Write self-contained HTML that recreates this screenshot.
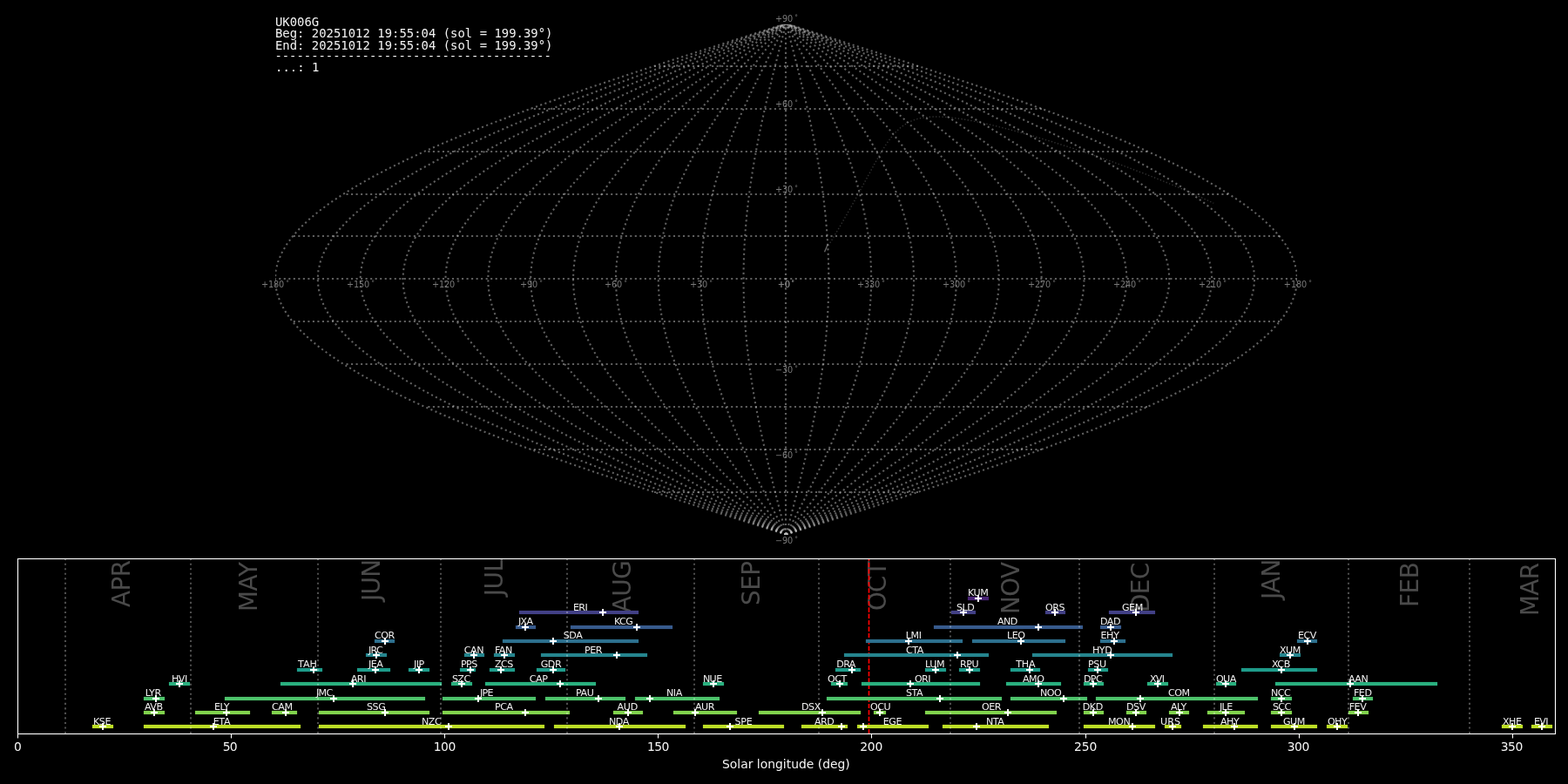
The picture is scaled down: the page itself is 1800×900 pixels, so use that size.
<!DOCTYPE html>
<html lang="en"><head><meta charset="utf-8"><title>UK006G shower association</title>
<style>html,body{margin:0;padding:0;background:#000;width:1800px;height:900px;overflow:hidden}svg{display:block;position:absolute;left:0;top:0;will-change:transform}text{font-family:"DejaVu Sans","Liberation Sans",sans-serif;white-space:pre}.mono{font-family:"DejaVu Sans Mono","Liberation Mono",monospace;font-size:13.889px;fill:#fff;fill-opacity:.95}.g{fill:none;stroke:#c0c0c0;stroke-opacity:.5;stroke-width:2.08;stroke-dasharray:2.0833 3.4375}.tl{font-size:9.722px;fill:#808080;fill-opacity:.94}.dg{font-size:7.4px}.bl{font-size:11.111px;fill:#fff;fill-opacity:.94}.xt{font-size:13.889px;fill:#fff;fill-opacity:.96}.mo{font-size:27.778px;fill:#fff;fill-opacity:.29}.ml{stroke:#fff;stroke-opacity:.3;stroke-width:2.08;stroke-dasharray:2.0833 3.4375;fill:none}</style></head><body>
<svg width="1800" height="900" viewBox="0 0 1800 900">
<rect width="1800" height="900" fill="#000"/>
<defs><clipPath id="c1"><rect x="316" y="28" width="1173" height="586"/></clipPath>
<clipPath id="c2"><rect x="20" y="641" width="1765" height="202"/></clipPath></defs>
<g clip-path="url(#c1)">
<g class="g">
<path d="M902 614 V27"/>
<path d="M902.42 613.61 899.86 603.84 897.31 594.06 894.77 584.28 892.26 574.51 889.77 564.73 887.31 554.95 884.9 545.18 882.54 535.4 880.23 525.62 877.98 515.85 875.8 506.07 873.69 496.3 871.66 486.52 869.71 476.74 867.86 466.97 866.09 457.19 864.43 447.41 862.87 437.64 861.42 427.86 860.09 418.08 858.87 408.31 857.76 398.53 856.78 388.75 855.93 378.98 855.2 369.2 854.61 359.43 854.14 349.65 853.81 339.87 853.6 330.1 853.54 320.32 853.6 310.54 853.81 300.77 854.14 290.99 854.61 281.21 855.2 271.44 855.93 261.66 856.78 251.89 857.76 242.11 858.87 232.33 860.09 222.56 861.42 212.78 862.87 203 864.43 193.23 866.09 183.45 867.86 173.67 869.71 163.9 871.66 154.12 873.69 144.34 875.8 134.57 877.98 124.79 880.23 115.02 882.54 105.24 884.9 95.46 887.31 85.69 889.77 75.91 892.26 66.13 894.77 56.36 897.31 46.58 899.86 36.8 902.42 27.03"/>
<path d="M902.42 613.61 897.3 603.84 892.2 594.06 887.13 584.28 882.09 574.51 877.12 564.73 872.21 554.95 867.38 545.18 862.66 535.4 858.04 525.62 853.54 515.85 849.17 506.07 844.96 496.3 840.9 486.52 837 476.74 833.29 466.97 829.77 457.19 826.44 447.41 823.33 437.64 820.43 427.86 817.75 418.08 815.31 408.31 813.11 398.53 811.15 388.75 809.44 378.98 807.99 369.2 806.79 359.43 805.86 349.65 805.19 339.87 804.79 330.1 804.66 320.32 804.79 310.54 805.19 300.77 805.86 290.99 806.79 281.21 807.99 271.44 809.44 261.66 811.15 251.89 813.11 242.11 815.31 232.33 817.75 222.56 820.43 212.78 823.33 203 826.44 193.23 829.77 183.45 833.29 173.67 837 163.9 840.9 154.12 844.96 144.34 849.17 134.57 853.54 124.79 858.04 115.02 862.66 105.24 867.38 95.46 872.21 85.69 877.12 75.91 882.09 66.13 887.13 56.36 892.2 46.58 897.3 36.8 902.42 27.03"/>
<path d="M902.42 613.61 894.75 603.84 887.09 594.06 879.48 584.28 871.93 574.51 864.47 564.73 857.1 554.95 849.87 545.18 842.77 535.4 835.84 525.62 829.1 515.85 822.55 506.07 816.22 496.3 810.13 486.52 804.29 476.74 798.73 466.97 793.44 457.19 788.45 447.41 783.78 437.64 779.43 427.86 775.42 418.08 771.76 408.31 768.45 398.53 765.51 388.75 762.95 378.98 760.77 369.2 758.98 359.43 757.58 349.65 756.58 339.87 755.97 330.1 755.77 320.32 755.97 310.54 756.58 300.77 757.58 290.99 758.98 281.21 760.77 271.44 762.95 261.66 765.51 251.89 768.45 242.11 771.76 232.33 775.42 222.56 779.43 212.78 783.78 203 788.45 193.23 793.44 183.45 798.73 173.67 804.29 163.9 810.13 154.12 816.22 144.34 822.55 134.57 829.1 124.79 835.84 115.02 842.77 105.24 849.87 95.46 857.1 85.69 864.47 75.91 871.93 66.13 879.48 56.36 887.09 46.58 894.75 36.8 902.42 27.03"/>
<path d="M902.42 613.61 892.19 603.84 881.98 594.06 871.83 584.28 861.77 574.51 851.81 564.73 842 554.95 832.35 545.18 822.89 535.4 813.65 525.62 804.66 515.85 795.93 506.07 787.49 496.3 779.37 486.52 771.59 476.74 764.16 466.97 757.11 457.19 750.47 447.41 744.23 437.64 738.44 427.86 733.09 418.08 728.2 408.31 723.8 398.53 719.88 388.75 716.46 378.98 713.55 369.2 711.16 359.43 709.3 349.65 707.96 339.87 707.16 330.1 706.89 320.32 707.16 310.54 707.96 300.77 709.3 290.99 711.16 281.21 713.55 271.44 716.46 261.66 719.88 251.89 723.8 242.11 728.2 232.33 733.09 222.56 738.44 212.78 744.23 203 750.47 193.23 757.11 183.45 764.16 173.67 771.59 163.9 779.37 154.12 787.49 144.34 795.93 134.57 804.66 124.79 813.65 115.02 822.89 105.24 832.35 95.46 842 85.69 851.81 75.91 861.77 66.13 871.83 56.36 881.98 46.58 892.19 36.8 902.42 27.03"/>
<path d="M902.42 613.61 889.63 603.84 876.87 594.06 864.19 584.28 851.6 574.51 839.16 564.73 826.89 554.95 814.83 545.18 803.01 535.4 791.46 525.62 780.21 515.85 769.3 506.07 758.76 496.3 748.61 486.52 738.88 476.74 729.6 466.97 720.79 457.19 712.48 447.41 704.69 437.64 697.44 427.86 690.75 418.08 684.65 408.31 679.14 398.53 674.24 388.75 669.97 378.98 666.34 369.2 663.35 359.43 661.02 349.65 659.35 339.87 658.34 330.1 658.01 320.32 658.34 310.54 659.35 300.77 661.02 290.99 663.35 281.21 666.34 271.44 669.97 261.66 674.24 251.89 679.14 242.11 684.65 232.33 690.75 222.56 697.44 212.78 704.69 203 712.48 193.23 720.79 183.45 729.6 173.67 738.88 163.9 748.61 154.12 758.76 144.34 769.3 134.57 780.21 124.79 791.46 115.02 803.01 105.24 814.83 95.46 826.89 85.69 839.16 75.91 851.6 66.13 864.19 56.36 876.87 46.58 889.63 36.8 902.42 27.03"/>
<path d="M902.42 613.61 887.07 603.84 871.76 594.06 856.54 584.28 841.44 574.51 826.51 564.73 811.79 554.95 797.31 545.18 783.13 535.4 769.27 525.62 755.77 515.85 742.68 506.07 730.03 496.3 717.85 486.52 706.17 476.74 695.03 466.97 684.46 457.19 674.49 447.41 665.14 437.64 656.44 427.86 648.42 418.08 641.09 408.31 634.48 398.53 628.61 388.75 623.48 378.98 619.12 369.2 615.54 359.43 612.74 349.65 610.73 339.87 609.53 330.1 609.13 320.32 609.53 310.54 610.73 300.77 612.74 290.99 615.54 281.21 619.12 271.44 623.48 261.66 628.61 251.89 634.48 242.11 641.09 232.33 648.42 222.56 656.44 212.78 665.14 203 674.49 193.23 684.46 183.45 695.03 173.67 706.17 163.9 717.85 154.12 730.03 144.34 742.68 134.57 755.77 124.79 769.27 115.02 783.13 105.24 797.31 95.46 811.79 85.69 826.51 75.91 841.44 66.13 856.54 56.36 871.76 46.58 887.07 36.8 902.42 27.03"/>
<path d="M902.42 613.61 884.51 603.84 866.65 594.06 848.89 584.28 831.28 574.51 813.86 564.73 796.68 554.95 779.8 545.18 763.25 535.4 747.08 525.62 731.33 515.85 716.06 506.07 701.3 496.3 687.08 486.52 673.46 476.74 660.47 466.97 648.14 457.19 636.5 447.41 625.6 437.64 615.45 427.86 606.09 418.08 597.54 408.31 589.83 398.53 582.97 388.75 576.99 378.98 571.91 369.2 567.72 359.43 564.46 349.65 562.12 339.87 560.71 330.1 560.25 320.32 560.71 310.54 562.12 300.77 564.46 290.99 567.72 281.21 571.91 271.44 576.99 261.66 582.97 251.89 589.83 242.11 597.54 232.33 606.09 222.56 615.45 212.78 625.6 203 636.5 193.23 648.14 183.45 660.47 173.67 673.46 163.9 687.08 154.12 701.3 144.34 716.06 134.57 731.33 124.79 747.08 115.02 763.25 105.24 779.8 95.46 796.68 85.69 813.86 75.91 831.28 66.13 848.89 56.36 866.65 46.58 884.51 36.8 902.42 27.03"/>
<path d="M902.42 613.61 881.95 603.84 861.54 594.06 841.25 584.28 821.11 574.51 801.21 564.73 781.58 554.95 762.28 545.18 743.36 535.4 724.88 525.62 706.89 515.85 689.44 506.07 672.56 496.3 656.32 486.52 640.75 476.74 625.9 466.97 611.81 457.19 598.51 447.41 586.05 437.64 574.45 427.86 563.76 418.08 553.99 408.31 545.17 398.53 537.34 388.75 530.5 378.98 524.69 369.2 519.91 359.43 516.18 349.65 513.51 339.87 511.9 330.1 511.36 320.32 511.9 310.54 513.51 300.77 516.18 290.99 519.91 281.21 524.69 271.44 530.5 261.66 537.34 251.89 545.17 242.11 553.99 232.33 563.76 222.56 574.45 212.78 586.05 203 598.51 193.23 611.81 183.45 625.9 173.67 640.75 163.9 656.32 154.12 672.56 144.34 689.44 134.57 706.89 124.79 724.88 115.02 743.36 105.24 762.28 95.46 781.58 85.69 801.21 75.91 821.11 66.13 841.25 56.36 861.54 46.58 881.95 36.8 902.42 27.03"/>
<path d="M902.42 613.61 879.4 603.84 856.43 594.06 833.6 584.28 810.95 574.51 788.56 564.73 766.47 554.95 744.76 545.18 723.48 535.4 702.69 525.62 682.45 515.85 662.81 506.07 643.83 496.3 625.56 486.52 608.04 476.74 591.34 466.97 575.48 457.19 560.52 447.41 546.5 437.64 533.46 427.86 521.42 418.08 510.43 408.31 500.52 398.53 491.7 388.75 484.01 378.98 477.47 369.2 472.1 359.43 467.9 349.65 464.89 339.87 463.08 330.1 462.48 320.32 463.08 310.54 464.89 300.77 467.9 290.99 472.1 281.21 477.47 271.44 484.01 261.66 491.7 251.89 500.52 242.11 510.43 232.33 521.42 222.56 533.46 212.78 546.5 203 560.52 193.23 575.48 183.45 591.34 173.67 608.04 163.9 625.56 154.12 643.83 144.34 662.81 134.57 682.45 124.79 702.69 115.02 723.48 105.24 744.76 95.46 766.47 85.69 788.56 75.91 810.95 66.13 833.6 56.36 856.43 46.58 879.4 36.8 902.42 27.03"/>
<path d="M902.42 613.61 876.84 603.84 851.32 594.06 825.95 584.28 800.79 574.51 775.9 564.73 751.37 554.95 727.24 545.18 703.6 535.4 680.5 525.62 658.01 515.85 636.19 506.07 615.1 496.3 594.8 486.52 575.34 476.74 556.77 466.97 539.16 457.19 522.54 447.41 506.96 437.64 492.46 427.86 479.09 418.08 466.88 408.31 455.86 398.53 446.07 388.75 437.52 378.98 430.26 369.2 424.28 359.43 419.62 349.65 416.28 339.87 414.27 330.1 413.6 320.32 414.27 310.54 416.28 300.77 419.62 290.99 424.28 281.21 430.26 271.44 437.52 261.66 446.07 251.89 455.86 242.11 466.88 232.33 479.09 222.56 492.46 212.78 506.96 203 522.54 193.23 539.16 183.45 556.77 173.67 575.34 163.9 594.8 154.12 615.1 144.34 636.19 134.57 658.01 124.79 680.5 115.02 703.6 105.24 727.24 95.46 751.37 85.69 775.9 75.91 800.79 66.13 825.95 56.36 851.32 46.58 876.84 36.8 902.42 27.03"/>
<path d="M902.42 613.61 874.28 603.84 846.21 594.06 818.3 584.28 790.63 574.51 763.25 564.73 736.26 554.95 709.72 545.18 683.72 535.4 658.31 525.62 633.57 515.85 609.57 506.07 586.37 496.3 564.03 486.52 542.63 476.74 522.21 466.97 502.83 457.19 484.55 447.41 467.41 437.64 451.47 427.86 436.76 418.08 423.32 408.31 411.2 398.53 400.43 388.75 391.04 378.98 383.04 369.2 376.47 359.43 371.34 349.65 367.66 339.87 365.45 330.1 364.72 320.32 365.45 310.54 367.66 300.77 371.34 290.99 376.47 281.21 383.04 271.44 391.04 261.66 400.43 251.89 411.2 242.11 423.32 232.33 436.76 222.56 451.47 212.78 467.41 203 484.55 193.23 502.83 183.45 522.21 173.67 542.63 163.9 564.03 154.12 586.37 144.34 609.57 134.57 633.57 124.79 658.31 115.02 683.72 105.24 709.72 95.46 736.26 85.69 763.25 75.91 790.63 66.13 818.3 56.36 846.21 46.58 874.28 36.8 902.42 27.03"/>
<path d="M902.42 613.61 871.72 603.84 841.11 594.06 810.66 584.28 780.46 574.51 750.6 564.73 721.16 554.95 692.21 545.18 663.83 535.4 636.12 525.62 609.13 515.85 582.94 506.07 557.63 496.3 533.27 486.52 509.92 476.74 487.64 466.97 466.5 457.19 446.56 447.41 427.86 437.64 410.47 427.86 394.42 418.08 379.77 408.31 366.55 398.53 354.8 388.75 344.55 378.98 335.82 369.2 328.65 359.43 323.06 349.65 319.05 339.87 316.64 330.1 315.84 320.32 316.64 310.54 319.05 300.77 323.06 290.99 328.65 281.21 335.82 271.44 344.55 261.66 354.8 251.89 366.55 242.11 379.77 232.33 394.42 222.56 410.47 212.78 427.86 203 446.56 193.23 466.5 183.45 487.64 173.67 509.92 163.9 533.27 154.12 557.63 144.34 582.94 134.57 609.13 124.79 636.12 115.02 663.83 105.24 692.21 95.46 721.16 85.69 750.6 75.91 780.46 66.13 810.66 56.36 841.11 46.58 871.72 36.8 902.42 27.03"/>
<path d="M902.42 613.61 933.12 603.84 963.73 594.06 994.18 584.28 1024.38 574.51 1054.24 564.73 1083.68 554.95 1112.63 545.18 1141.01 535.4 1168.72 525.62 1195.71 515.85 1221.9 506.07 1247.21 496.3 1271.57 486.52 1294.92 476.74 1317.2 466.97 1338.34 457.19 1358.28 447.41 1376.98 437.64 1394.37 427.86 1410.42 418.08 1425.07 408.31 1438.29 398.53 1450.04 388.75 1460.29 378.98 1469.02 369.2 1476.19 359.43 1481.78 349.65 1485.79 339.87 1488.2 330.1 1489 320.32 1488.2 310.54 1485.79 300.77 1481.78 290.99 1476.19 281.21 1469.02 271.44 1460.29 261.66 1450.04 251.89 1438.29 242.11 1425.07 232.33 1410.42 222.56 1394.37 212.78 1376.98 203 1358.28 193.23 1338.34 183.45 1317.2 173.67 1294.92 163.9 1271.57 154.12 1247.21 144.34 1221.9 134.57 1195.71 124.79 1168.72 115.02 1141.01 105.24 1112.63 95.46 1083.68 85.69 1054.24 75.91 1024.38 66.13 994.18 56.36 963.73 46.58 933.12 36.8 902.42 27.03"/>
<path d="M902.42 613.61 930.56 603.84 958.63 594.06 986.54 584.28 1014.21 574.51 1041.59 564.73 1068.58 554.95 1095.12 545.18 1121.12 535.4 1146.53 525.62 1171.27 515.85 1195.27 506.07 1218.47 496.3 1240.81 486.52 1262.21 476.74 1282.63 466.97 1302.01 457.19 1320.29 447.41 1337.43 437.64 1353.37 427.86 1368.08 418.08 1381.52 408.31 1393.64 398.53 1404.41 388.75 1413.8 378.98 1421.8 369.2 1428.37 359.43 1433.5 349.65 1437.18 339.87 1439.39 330.1 1440.12 320.32 1439.39 310.54 1437.18 300.77 1433.5 290.99 1428.37 281.21 1421.8 271.44 1413.8 261.66 1404.41 251.89 1393.64 242.11 1381.52 232.33 1368.08 222.56 1353.37 212.78 1337.43 203 1320.29 193.23 1302.01 183.45 1282.63 173.67 1262.21 163.9 1240.81 154.12 1218.47 144.34 1195.27 134.57 1171.27 124.79 1146.53 115.02 1121.12 105.24 1095.12 95.46 1068.58 85.69 1041.59 75.91 1014.21 66.13 986.54 56.36 958.63 46.58 930.56 36.8 902.42 27.03"/>
<path d="M902.42 613.61 928 603.84 953.52 594.06 978.89 584.28 1004.05 574.51 1028.94 564.73 1053.47 554.95 1077.6 545.18 1101.24 535.4 1124.34 525.62 1146.83 515.85 1168.65 506.07 1189.74 496.3 1210.04 486.52 1229.5 476.74 1248.07 466.97 1265.68 457.19 1282.3 447.41 1297.88 437.64 1312.38 427.86 1325.75 418.08 1337.96 408.31 1348.98 398.53 1358.77 388.75 1367.32 378.98 1374.58 369.2 1380.56 359.43 1385.22 349.65 1388.56 339.87 1390.57 330.1 1391.24 320.32 1390.57 310.54 1388.56 300.77 1385.22 290.99 1380.56 281.21 1374.58 271.44 1367.32 261.66 1358.77 251.89 1348.98 242.11 1337.96 232.33 1325.75 222.56 1312.38 212.78 1297.88 203 1282.3 193.23 1265.68 183.45 1248.07 173.67 1229.5 163.9 1210.04 154.12 1189.74 144.34 1168.65 134.57 1146.83 124.79 1124.34 115.02 1101.24 105.24 1077.6 95.46 1053.47 85.69 1028.94 75.91 1004.05 66.13 978.89 56.36 953.52 46.58 928 36.8 902.42 27.03"/>
<path d="M902.42 613.61 925.44 603.84 948.41 594.06 971.24 584.28 993.89 574.51 1016.28 564.73 1038.37 554.95 1060.08 545.18 1081.36 535.4 1102.15 525.62 1122.39 515.85 1142.03 506.07 1161.01 496.3 1179.28 486.52 1196.8 476.74 1213.5 466.97 1229.36 457.19 1244.32 447.41 1258.34 437.64 1271.38 427.86 1283.42 418.08 1294.41 408.31 1304.32 398.53 1313.14 388.75 1320.83 378.98 1327.37 369.2 1332.74 359.43 1336.94 349.65 1339.95 339.87 1341.76 330.1 1342.36 320.32 1341.76 310.54 1339.95 300.77 1336.94 290.99 1332.74 281.21 1327.37 271.44 1320.83 261.66 1313.14 251.89 1304.32 242.11 1294.41 232.33 1283.42 222.56 1271.38 212.78 1258.34 203 1244.32 193.23 1229.36 183.45 1213.5 173.67 1196.8 163.9 1179.28 154.12 1161.01 144.34 1142.03 134.57 1122.39 124.79 1102.15 115.02 1081.36 105.24 1060.08 95.46 1038.37 85.69 1016.28 75.91 993.89 66.13 971.24 56.36 948.41 46.58 925.44 36.8 902.42 27.03"/>
<path d="M902.42 613.61 922.89 603.84 943.3 594.06 963.59 584.28 983.73 574.51 1003.63 564.73 1023.26 554.95 1042.56 545.18 1061.48 535.4 1079.96 525.62 1097.95 515.85 1115.4 506.07 1132.28 496.3 1148.52 486.52 1164.09 476.74 1178.94 466.97 1193.03 457.19 1206.33 447.41 1218.79 437.64 1230.39 427.86 1241.08 418.08 1250.85 408.31 1259.67 398.53 1267.5 388.75 1274.34 378.98 1280.15 369.2 1284.93 359.43 1288.66 349.65 1291.33 339.87 1292.94 330.1 1293.48 320.32 1292.94 310.54 1291.33 300.77 1288.66 290.99 1284.93 281.21 1280.15 271.44 1274.34 261.66 1267.5 251.89 1259.67 242.11 1250.85 232.33 1241.08 222.56 1230.39 212.78 1218.79 203 1206.33 193.23 1193.03 183.45 1178.94 173.67 1164.09 163.9 1148.52 154.12 1132.28 144.34 1115.4 134.57 1097.95 124.79 1079.96 115.02 1061.48 105.24 1042.56 95.46 1023.26 85.69 1003.63 75.91 983.73 66.13 963.59 56.36 943.3 46.58 922.89 36.8 902.42 27.03"/>
<path d="M902.42 613.61 920.33 603.84 938.19 594.06 955.95 584.28 973.56 574.51 990.98 564.73 1008.16 554.95 1025.04 545.18 1041.59 535.4 1057.76 525.62 1073.51 515.85 1088.78 506.07 1103.54 496.3 1117.76 486.52 1131.38 476.74 1144.37 466.97 1156.7 457.19 1168.34 447.41 1179.24 437.64 1189.39 427.86 1198.75 418.08 1207.3 408.31 1215.01 398.53 1221.87 388.75 1227.85 378.98 1232.93 369.2 1237.12 359.43 1240.38 349.65 1242.72 339.87 1244.13 330.1 1244.59 320.32 1244.13 310.54 1242.72 300.77 1240.38 290.99 1237.12 281.21 1232.93 271.44 1227.85 261.66 1221.87 251.89 1215.01 242.11 1207.3 232.33 1198.75 222.56 1189.39 212.78 1179.24 203 1168.34 193.23 1156.7 183.45 1144.37 173.67 1131.38 163.9 1117.76 154.12 1103.54 144.34 1088.78 134.57 1073.51 124.79 1057.76 115.02 1041.59 105.24 1025.04 95.46 1008.16 85.69 990.98 75.91 973.56 66.13 955.95 56.36 938.19 46.58 920.33 36.8 902.42 27.03"/>
<path d="M902.42 613.61 917.77 603.84 933.08 594.06 948.3 584.28 963.4 574.51 978.33 564.73 993.05 554.95 1007.53 545.18 1021.71 535.4 1035.57 525.62 1049.07 515.85 1062.16 506.07 1074.81 496.3 1086.99 486.52 1098.67 476.74 1109.81 466.97 1120.38 457.19 1130.35 447.41 1139.7 437.64 1148.4 427.86 1156.42 418.08 1163.75 408.31 1170.36 398.53 1176.23 388.75 1181.36 378.98 1185.72 369.2 1189.3 359.43 1192.1 349.65 1194.11 339.87 1195.31 330.1 1195.71 320.32 1195.31 310.54 1194.11 300.77 1192.1 290.99 1189.3 281.21 1185.72 271.44 1181.36 261.66 1176.23 251.89 1170.36 242.11 1163.75 232.33 1156.42 222.56 1148.4 212.78 1139.7 203 1130.35 193.23 1120.38 183.45 1109.81 173.67 1098.67 163.9 1086.99 154.12 1074.81 144.34 1062.16 134.57 1049.07 124.79 1035.57 115.02 1021.71 105.24 1007.53 95.46 993.05 85.69 978.33 75.91 963.4 66.13 948.3 56.36 933.08 46.58 917.77 36.8 902.42 27.03"/>
<path d="M902.42 613.61 915.21 603.84 927.97 594.06 940.65 584.28 953.24 574.51 965.68 564.73 977.95 554.95 990.01 545.18 1001.83 535.4 1013.38 525.62 1024.62 515.85 1035.54 506.07 1046.08 496.3 1056.23 486.52 1065.96 476.74 1075.24 466.97 1084.05 457.19 1092.36 447.41 1100.15 437.64 1107.4 427.86 1114.09 418.08 1120.19 408.31 1125.7 398.53 1130.6 388.75 1134.87 378.98 1138.5 369.2 1141.49 359.43 1143.82 349.65 1145.49 339.87 1146.5 330.1 1146.83 320.32 1146.5 310.54 1145.49 300.77 1143.82 290.99 1141.49 281.21 1138.5 271.44 1134.87 261.66 1130.6 251.89 1125.7 242.11 1120.19 232.33 1114.09 222.56 1107.4 212.78 1100.15 203 1092.36 193.23 1084.05 183.45 1075.24 173.67 1065.96 163.9 1056.23 154.12 1046.08 144.34 1035.54 134.57 1024.62 124.79 1013.38 115.02 1001.83 105.24 990.01 95.46 977.95 85.69 965.68 75.91 953.24 66.13 940.65 56.36 927.97 46.58 915.21 36.8 902.42 27.03"/>
<path d="M902.42 613.61 912.65 603.84 922.86 594.06 933.01 584.28 943.07 574.51 953.03 564.73 962.84 554.95 972.49 545.18 981.95 535.4 991.19 525.62 1000.18 515.85 1008.91 506.07 1017.35 496.3 1025.47 486.52 1033.25 476.74 1040.68 466.97 1047.73 457.19 1054.37 447.41 1060.61 437.64 1066.4 427.86 1071.75 418.08 1076.64 408.31 1081.04 398.53 1084.96 388.75 1088.38 378.98 1091.29 369.2 1093.68 359.43 1095.54 349.65 1096.88 339.87 1097.68 330.1 1097.95 320.32 1097.68 310.54 1096.88 300.77 1095.54 290.99 1093.68 281.21 1091.29 271.44 1088.38 261.66 1084.96 251.89 1081.04 242.11 1076.64 232.33 1071.75 222.56 1066.4 212.78 1060.61 203 1054.37 193.23 1047.73 183.45 1040.68 173.67 1033.25 163.9 1025.47 154.12 1017.35 144.34 1008.91 134.57 1000.18 124.79 991.19 115.02 981.95 105.24 972.49 95.46 962.84 85.69 953.03 75.91 943.07 66.13 933.01 56.36 922.86 46.58 912.65 36.8 902.42 27.03"/>
<path d="M902.42 613.61 910.09 603.84 917.75 594.06 925.36 584.28 932.91 574.51 940.37 564.73 947.74 554.95 954.97 545.18 962.07 535.4 969 525.62 975.74 515.85 982.29 506.07 988.62 496.3 994.71 486.52 1000.55 476.74 1006.11 466.97 1011.4 457.19 1016.39 447.41 1021.06 437.64 1025.41 427.86 1029.42 418.08 1033.08 408.31 1036.39 398.53 1039.33 388.75 1041.89 378.98 1044.07 369.2 1045.86 359.43 1047.26 349.65 1048.26 339.87 1048.87 330.1 1049.07 320.32 1048.87 310.54 1048.26 300.77 1047.26 290.99 1045.86 281.21 1044.07 271.44 1041.89 261.66 1039.33 251.89 1036.39 242.11 1033.08 232.33 1029.42 222.56 1025.41 212.78 1021.06 203 1016.39 193.23 1011.4 183.45 1006.11 173.67 1000.55 163.9 994.71 154.12 988.62 144.34 982.29 134.57 975.74 124.79 969 115.02 962.07 105.24 954.97 95.46 947.74 85.69 940.37 75.91 932.91 66.13 925.36 56.36 917.75 46.58 910.09 36.8 902.42 27.03"/>
<path d="M902.42 613.61 907.54 603.84 912.64 594.06 917.71 584.28 922.75 574.51 927.72 564.73 932.63 554.95 937.46 545.18 942.18 535.4 946.8 525.62 951.3 515.85 955.67 506.07 959.88 496.3 963.94 486.52 967.84 476.74 971.55 466.97 975.07 457.19 978.4 447.41 981.51 437.64 984.41 427.86 987.09 418.08 989.53 408.31 991.73 398.53 993.69 388.75 995.4 378.98 996.85 369.2 998.05 359.43 998.98 349.65 999.65 339.87 1000.05 330.1 1000.18 320.32 1000.05 310.54 999.65 300.77 998.98 290.99 998.05 281.21 996.85 271.44 995.4 261.66 993.69 251.89 991.73 242.11 989.53 232.33 987.09 222.56 984.41 212.78 981.51 203 978.4 193.23 975.07 183.45 971.55 173.67 967.84 163.9 963.94 154.12 959.88 144.34 955.67 134.57 951.3 124.79 946.8 115.02 942.18 105.24 937.46 95.46 932.63 85.69 927.72 75.91 922.75 66.13 917.71 56.36 912.64 46.58 907.54 36.8 902.42 27.03"/>
<path d="M902.42 613.61 904.98 603.84 907.53 594.06 910.07 584.28 912.58 574.51 915.07 564.73 917.53 554.95 919.94 545.18 922.3 535.4 924.61 525.62 926.86 515.85 929.04 506.07 931.15 496.3 933.18 486.52 935.13 476.74 936.98 466.97 938.75 457.19 940.41 447.41 941.97 437.64 943.42 427.86 944.75 418.08 945.97 408.31 947.08 398.53 948.06 388.75 948.91 378.98 949.64 369.2 950.23 359.43 950.7 349.65 951.03 339.87 951.24 330.1 951.3 320.32 951.24 310.54 951.03 300.77 950.7 290.99 950.23 281.21 949.64 271.44 948.91 261.66 948.06 251.89 947.08 242.11 945.97 232.33 944.75 222.56 943.42 212.78 941.97 203 940.41 193.23 938.75 183.45 936.98 173.67 935.13 163.9 933.18 154.12 931.15 144.34 929.04 134.57 926.86 124.79 924.61 115.02 922.3 105.24 919.94 95.46 917.53 85.69 915.07 75.91 912.58 66.13 910.07 56.36 907.53 46.58 904.98 36.8 902.42 27.03"/>
<path d="M902 565 H751"/>
<path d="M1054 565 H902"/>
<path d="M902 516 H609"/>
<path d="M1196 516 H902"/>
<path d="M902 467 H488"/>
<path d="M1317 467 H902"/>
<path d="M902 418 H394"/>
<path d="M1410 418 H902"/>
<path d="M902 369 H336"/>
<path d="M1469 369 H902"/>
<path d="M902 320 H316"/>
<path d="M1489 320 H902"/>
<path d="M902 271 H336"/>
<path d="M1469 271 H902"/>
<path d="M902 223 H394"/>
<path d="M1410 223 H902"/>
<path d="M902 174 H488"/>
<path d="M1317 174 H902"/>
<path d="M902 125 H609"/>
<path d="M1196 125 H902"/>
<path d="M902 76 H751"/>
<path d="M1054 76 H902"/>
</g>
<path d="M950.91 282.06 951.76 280.66 952.61 279.26 953.46 277.86 954.31 276.47 955.15 275.07 955.99 273.68 956.83 272.28 957.66 270.89 958.49 269.5 959.32 268.11 960.15 266.72 960.97 265.33 961.79 263.95 962.61 262.57 963.42 261.18 964.23 259.8 965.04 258.42 965.84 257.05 966.64 255.67 967.44 254.3 968.23 252.93 969.02 251.56 969.81 250.19 970.59 248.82 971.37 247.46 972.15 246.1 972.92 244.74 973.69 243.38 974.46 242.03 975.22 240.67 975.98 239.32 976.74 237.97 977.49 236.63 978.24 235.29 978.99 233.95 979.74 232.61 980.48 231.28 981.21 229.95 981.95 228.62 982.68 227.29 983.4 225.97 984.13 224.65 984.85 223.34 985.56 222.02 986.28 220.72 986.99 219.41 987.69 218.11 988.4 216.81 989.1 215.52 989.8 214.23 990.49 212.94 991.19 211.66 991.88 210.38 992.56 209.11 993.25 207.84 993.93 206.58 994.61 205.32 995.28 204.06 995.96 202.81 996.63 201.57 997.3 200.33 997.96 199.09 998.63 197.86 999.29 196.64 999.95 195.42 1000.61 194.2 1001.27 193 1001.93 191.8 1002.58 190.6 1003.23 189.41 1003.89 188.23 1004.54 187.06 1005.19 185.89 1005.84 184.72 1006.49 183.57 1007.14 182.42 1007.79 181.28 1008.43 180.15 1009.08 179.02 1009.73 177.91 1010.38 176.8 1011.03 175.7 1011.69 174.61 1012.34 173.52 1012.99 172.45 1013.65 171.38 1014.31 170.33 1014.97 169.28 1015.64 168.25 1016.3 167.22 1016.97 166.2 1017.65 165.2 1018.33 164.2 1019.01 163.22 1019.7 162.25 1020.39 161.28 1021.08 160.33 1021.79 159.4 1022.5 158.47 1023.21 157.56 1023.94 156.66 1024.67 155.77 1025.4 154.9 1026.15 154.04 1026.91 153.19 1027.67 152.36 1028.44 151.54 1029.23 150.74 1030.02 149.95 1030.83 149.18 1031.65 148.42 1032.48 147.68 1033.33 146.96 1034.18 146.25 1035.06 145.56 1035.94 144.89 1036.84 144.23 1037.76 143.59 1038.7 142.97 1039.65 142.37 1040.62 141.79 1041.61 141.22 1042.62 140.68 1043.64 140.15 1044.69 139.65 1045.76 139.16 1046.85 138.7 1047.97 138.25 1049.11 137.83 1050.27 137.43 1051.45 137.04 1052.66 136.68 1053.9 136.35 1055.16 136.03 1056.45 135.74 1057.77 135.47 1059.12 135.22 1060.49 134.99 1061.9 134.79 1063.33 134.61 1064.8 134.45 1066.29 134.32 1067.82 134.2 1069.38 134.12 1070.97 134.05 1072.59 134.01 1074.25 134 1075.94 134 1077.67 134.03 1079.43 134.08 1081.22 134.16 1083.05 134.26 1084.91 134.38 1086.81 134.53 1088.74 134.7 1090.71 134.89 1092.71 135.11 1094.75 135.35 1096.82 135.61 1098.93 135.89 1101.07 136.2 1103.25 136.53 1105.47 136.88 1107.71 137.25 1110 137.64 1112.31 138.05 1114.66 138.49 1117.05 138.94 1119.46 139.42 1121.91 139.92 1124.39 140.43 1126.91 140.97 1129.45 141.53 1132.03 142.1 1134.63 142.69 1137.27 143.3 1139.94 143.93 1142.63 144.58 1145.35 145.25 1148.1 145.93 1150.88 146.63 1153.68 147.35 1156.51 148.08 1159.36 148.83 1162.24 149.6 1165.14 150.38 1168.07 151.17 1171.01 151.98 1173.98 152.81 1176.97 153.65 1179.98 154.5 1183.01 155.37 1186.05 156.25 1189.12 157.14 1192.2 158.05 1195.29 158.97 1198.41 159.9 1201.54 160.85 1204.68 161.8 1207.83 162.77 1211 163.75 1214.18 164.74 1217.37 165.74 1220.57 166.75 1223.78 167.77 1227 168.8 1230.23 169.85 1233.46 170.9 1236.7 171.96 1239.95 173.03 1243.2 174.11 1246.46 175.19 1249.72 176.29 1252.98 177.4 1256.25 178.51 1259.52 179.63 1262.79 180.76 1266.06 181.9 1269.33 183.04 1272.6 184.19 1275.86 185.35 1279.13 186.52 1282.39 187.69 1285.65 188.87 1288.9 190.05 1292.16 191.25 1295.4 192.44 1298.64 193.65 1301.87 194.86 1305.1 196.08 1308.32 197.3 1311.53 198.52 1314.73 199.76 1317.92 200.99 1321.1 202.24 1324.27 203.49 1327.43 204.74 1330.58 206 1333.72 207.26 1336.84 208.53 1339.96 209.8 1343.06 211.07 1346.14 212.35 1349.21 213.64 1352.26 214.92 1355.3 216.22 1358.33 217.51 1361.33 218.81 1364.32 220.12 1367.3 221.42 1370.25 222.73 1373.19 224.05 1376.11 225.36 1379.01 226.68 1381.89 228.01 1384.75 229.33 1387.59 230.66 1390.41 232 1393.2 233.33" fill="none" stroke="#fff" stroke-opacity=".19" stroke-width="1.39" stroke-dasharray="1.3889 2.2917"/>
<path d="M946.5 289.3 L950.2 280.7" fill="none" stroke="#fff" stroke-opacity=".4" stroke-width="1.39"/>
</g>
<text class="tl" x="889.94" y="624" letter-spacing="-0.12">−90<tspan class="dg" x="912.21" y="620.57">°</tspan></text>
<text class="tl" x="889.94" y="526" letter-spacing="-0.12">−60<tspan class="dg" x="912.21" y="522.57">°</tspan></text>
<text class="tl" x="889.94" y="428" letter-spacing="-0.12">−30<tspan class="dg" x="912.21" y="424.57">°</tspan></text>
<text class="tl" x="892.97" y="330" letter-spacing="-0.04">+0<tspan class="dg" x="908.15" y="327">°</tspan></text>
<text class="tl" x="890.02" y="221" letter-spacing="-0.12">+30<tspan class="dg" x="912.21" y="217.57">°</tspan></text>
<text class="tl" x="890.02" y="123" letter-spacing="-0.12">+60<tspan class="dg" x="912.21" y="119.57">°</tspan></text>
<text class="tl" x="890.02" y="25" letter-spacing="-0.12">+90<tspan class="dg" x="912.21" y="21.57">°</tspan></text>
<text class="tl" x="892.67" y="330" letter-spacing="-0.04">+0<tspan class="dg" x="908.35" y="327">°</tspan></text>
<text class="tl" x="792.02" y="330" letter-spacing="-0.12">+30<tspan class="dg" x="814.14" y="326.66">°</tspan></text>
<text class="tl" x="694.04" y="330" letter-spacing="-0.12">+60<tspan class="dg" x="716.16" y="326.69">°</tspan></text>
<text class="tl" x="597.02" y="330" letter-spacing="-0.12">+90<tspan class="dg" x="619.37" y="326.62">°</tspan></text>
<text class="tl" x="496.01" y="330" letter-spacing="-0.19">+120<tspan class="dg" x="524.16" y="326.63">°</tspan></text>
<text class="tl" x="397.96" y="330" letter-spacing="-0.12">+150<tspan class="dg" x="426.18" y="326.66">°</tspan></text>
<text class="tl" x="299.89" y="330" letter-spacing="-0.12">+180<tspan class="dg" x="328.13" y="326.62">°</tspan></text>
<text class="tl" x="1473.82" y="330" letter-spacing="-0.08">+180<tspan class="dg" x="1502.15" y="326.65">°</tspan></text>
<text class="tl" x="1375.88" y="330" letter-spacing="-0.12">+210<tspan class="dg" x="1404.18" y="326.6">°</tspan></text>
<text class="tl" x="1277.93" y="330" letter-spacing="-0.12">+240<tspan class="dg" x="1306.21" y="326.63">°</tspan></text>
<text class="tl" x="1179.98" y="330" letter-spacing="-0.12">+270<tspan class="dg" x="1208.33" y="326.69">°</tspan></text>
<text class="tl" x="1082" y="330" letter-spacing="-0.19">+300<tspan class="dg" x="1110.34" y="326.65">°</tspan></text>
<text class="tl" x="983.93" y="330" letter-spacing="-0.12">+330<tspan class="dg" x="1012.37" y="326.63">°</tspan></text>
<text class="mono" x="316" y="30">UK006G</text>
<text class="mono" x="315.9" y="43" letter-spacing="0.03">Beg: 20251012 19:55:04 (sol = 199.39°)</text>
<text class="mono" x="315.9" y="57" letter-spacing="0.03">End: 20251012 19:55:04 (sol = 199.39°)</text>
<text class="mono" x="315.39" y="69">--------------------------------------</text>
<text class="mono" x="316.05" y="82" letter-spacing="0.03">...: 1</text>
<g clip-path="url(#c2)">
<text class="mo" transform="translate(1469.12 688.09) rotate(-90)" letter-spacing="-0.51">JAN</text>
<text class="mo" transform="translate(1628.22 696.9) rotate(-90)" letter-spacing="-0.47">FEB</text>
<text class="mo" transform="translate(1766.04 707.05) rotate(-90)" letter-spacing="-0.6">MAR</text>
<text class="mo" transform="translate(149.11 696.95) rotate(-90)" letter-spacing="-0.48">APR</text>
<text class="mo" transform="translate(295.22 701.95) rotate(-90)" letter-spacing="-0.43">MAY</text>
<text class="mo" transform="translate(436.22 689.94) rotate(-90)" letter-spacing="-0.65">JUN</text>
<text class="mo" transform="translate(577.32 684.19) rotate(-90)" letter-spacing="-0.41">JUL</text>
<text class="mo" transform="translate(723.52 703.3) rotate(-90)" letter-spacing="-0.42">AUG</text>
<text class="mo" transform="translate(872.1 694.92) rotate(-90)" letter-spacing="-0.54">SEP</text>
<text class="mo" transform="translate(1016.62 701) rotate(-90)" letter-spacing="-0.74">OCT</text>
<text class="mo" transform="translate(1170.11 704.9) rotate(-90)" letter-spacing="-0.58">NOV</text>
<text class="mo" transform="translate(1319.08 703.05) rotate(-90)" letter-spacing="-0.47">DEC</text>
<path d="M997.5 842.5 V641" stroke="#f00" stroke-width="1.39" stroke-dasharray="5.1389 2.2222" fill="none"/>
<path d="M997.5 842.5 V641" stroke="#f00" stroke-width="1.39" stroke-dasharray="5.1389 2.2222" fill="none"/>
<path d="M105.917 831.917H130.083V836.083H105.917ZM164.917 831.917H345.083V836.083H164.917ZM365.917 831.917H625.083V836.083H365.917ZM635.917 831.917H787.083V836.083H635.917ZM806.917 831.917H900.083V836.083H806.917ZM919.917 831.917H973.083V836.083H919.917ZM983.917 831.917H1066.083V836.083H983.917ZM1081.917 831.917H1204.083V836.083H1081.917ZM1243.917 831.917H1326.083V836.083H1243.917ZM1336.917 831.917H1356.083V836.083H1336.917ZM1380.917 831.917H1444.083V836.083H1380.917ZM1458.917 831.917H1512.083V836.083H1458.917ZM1522.917 831.917H1547.083V836.083H1522.917ZM1723.917 831.917H1748.083V836.083H1723.917ZM1757.917 831.917H1782.083V836.083H1757.917Z" fill="#bddf26"/>
<path d="M106 831H130v1H106zM106 836H130v1H106zM165 831H345v1H165zM165 836H345v1H165zM366 831H625v1H366zM366 836H625v1H366zM636 831H787v1H636zM636 836H787v1H636zM807 831H900v1H807zM807 836H900v1H807zM920 831H973v1H920zM920 836H973v1H920zM984 831H1066v1H984zM984 836H1066v1H984zM1082 831H1204v1H1082zM1082 836H1204v1H1082zM1244 831H1326v1H1244zM1244 836H1326v1H1244zM1337 831H1356v1H1337zM1337 836H1356v1H1337zM1381 831H1444v1H1381zM1381 836H1444v1H1381zM1459 831H1512v1H1459zM1459 836H1512v1H1459zM1523 831H1547v1H1523zM1523 836H1547v1H1523zM1724 831H1748v1H1724zM1724 836H1748v1H1724zM1758 831H1782v1H1758zM1758 836H1782v1H1758z" fill="#bddf26" fill-opacity=".083"/>
<path d="M164.917 815.917H189.083V820.083H164.917ZM223.917 815.917H287.083V820.083H223.917ZM311.917 815.917H341.083V820.083H311.917ZM365.917 815.917H493.083V820.083H365.917ZM507.917 815.917H654.083V820.083H507.917ZM703.917 815.917H738.083V820.083H703.917ZM772.917 815.917H846.083V820.083H772.917ZM870.917 815.917H988.083V820.083H870.917ZM1002.917 815.917H1017.083V820.083H1002.917ZM1061.917 815.917H1213.083V820.083H1061.917ZM1243.917 815.917H1267.083V820.083H1243.917ZM1292.917 815.917H1316.083V820.083H1292.917ZM1341.917 815.917H1365.083V820.083H1341.917ZM1385.917 815.917H1429.083V820.083H1385.917ZM1458.917 815.917H1483.083V820.083H1458.917ZM1547.917 815.917H1571.083V820.083H1547.917Z" fill="#81d34d"/>
<path d="M165 815H189v1H165zM165 820H189v1H165zM224 815H287v1H224zM224 820H287v1H224zM312 815H341v1H312zM312 820H341v1H312zM366 815H493v1H366zM366 820H493v1H366zM508 815H654v1H508zM508 820H654v1H508zM704 815H738v1H704zM704 820H738v1H704zM773 815H846v1H773zM773 820H846v1H773zM871 815H988v1H871zM871 820H988v1H871zM1003 815H1017v1H1003zM1003 820H1017v1H1003zM1062 815H1213v1H1062zM1062 820H1213v1H1062zM1244 815H1267v1H1244zM1244 820H1267v1H1244zM1293 815H1316v1H1293zM1293 820H1316v1H1293zM1342 815H1365v1H1342zM1342 820H1365v1H1342zM1386 815H1429v1H1386zM1386 820H1429v1H1386zM1459 815H1483v1H1459zM1459 820H1483v1H1459zM1548 815H1571v1H1548zM1548 820H1571v1H1548z" fill="#81d34d" fill-opacity=".083"/>
<path d="M164.917 799.917H189.083V804.083H164.917ZM257.917 799.917H488.083V804.083H257.917ZM507.917 799.917H615.083V804.083H507.917ZM625.917 799.917H718.083V804.083H625.917ZM728.917 799.917H826.083V804.083H728.917ZM948.917 799.917H1150.083V804.083H948.917ZM1159.917 799.917H1248.083V804.083H1159.917ZM1257.917 799.917H1444.083V804.083H1257.917ZM1458.917 799.917H1483.083V804.083H1458.917ZM1552.917 799.917H1576.083V804.083H1552.917Z" fill="#4ec36b"/>
<path d="M165 799H189v1H165zM165 804H189v1H165zM258 799H488v1H258zM258 804H488v1H258zM508 799H615v1H508zM508 804H615v1H508zM626 799H718v1H626zM626 804H718v1H626zM729 799H826v1H729zM729 804H826v1H729zM949 799H1150v1H949zM949 804H1150v1H949zM1160 799H1248v1H1160zM1160 804H1248v1H1160zM1258 799H1444v1H1258zM1258 804H1444v1H1258zM1459 799H1483v1H1459zM1459 804H1483v1H1459zM1553 799H1576v1H1553zM1553 804H1576v1H1553z" fill="#4ec36b" fill-opacity=".083"/>
<path d="M193.917 782.917H218.083V787.083H193.917ZM321.917 782.917H507.083V787.083H321.917ZM517.917 782.917H542.083V787.083H517.917ZM556.917 782.917H684.083V787.083H556.917ZM806.917 782.917H831.083V787.083H806.917ZM953.917 782.917H973.083V787.083H953.917ZM988.917 782.917H1125.083V787.083H988.917ZM1154.917 782.917H1218.083V787.083H1154.917ZM1243.917 782.917H1267.083V787.083H1243.917ZM1316.917 782.917H1341.083V787.083H1316.917ZM1395.917 782.917H1419.083V787.083H1395.917ZM1463.917 782.917H1650.083V787.083H1463.917Z" fill="#2ab07f"/>
<path d="M194 782H218v1H194zM194 787H218v1H194zM322 782H507v1H322zM322 787H507v1H322zM518 782H542v1H518zM518 787H542v1H518zM557 782H684v1H557zM557 787H684v1H557zM807 782H831v1H807zM807 787H831v1H807zM954 782H973v1H954zM954 787H973v1H954zM989 782H1125v1H989zM989 787H1125v1H989zM1155 782H1218v1H1155zM1155 787H1218v1H1155zM1244 782H1267v1H1244zM1244 787H1267v1H1244zM1317 782H1341v1H1317zM1317 787H1341v1H1317zM1396 782H1419v1H1396zM1396 787H1419v1H1396zM1464 782H1650v1H1464zM1464 787H1650v1H1464z" fill="#2ab07f" fill-opacity=".083"/>
<path d="M340.917 766.917H370.083V771.083H340.917ZM409.917 766.917H448.083V771.083H409.917ZM468.917 766.917H493.083V771.083H468.917ZM527.917 766.917H546.083V771.083H527.917ZM561.917 766.917H591.083V771.083H561.917ZM615.917 766.917H649.083V771.083H615.917ZM958.917 766.917H988.083V771.083H958.917ZM1061.917 766.917H1086.083V771.083H1061.917ZM1100.917 766.917H1125.083V771.083H1100.917ZM1159.917 766.917H1194.083V771.083H1159.917ZM1248.917 766.917H1272.083V771.083H1248.917ZM1424.917 766.917H1512.083V771.083H1424.917Z" fill="#1e9b8a"/>
<path d="M341 766H370v1H341zM341 771H370v1H341zM410 766H448v1H410zM410 771H448v1H410zM469 766H493v1H469zM469 771H493v1H469zM528 766H546v1H528zM528 771H546v1H528zM562 766H591v1H562zM562 771H591v1H562zM616 766H649v1H616zM616 771H649v1H616zM959 766H988v1H959zM959 771H988v1H959zM1062 766H1086v1H1062zM1062 771H1086v1H1062zM1101 766H1125v1H1101zM1101 771H1125v1H1101zM1160 766H1194v1H1160zM1160 771H1194v1H1160zM1249 766H1272v1H1249zM1249 771H1272v1H1249zM1425 766H1512v1H1425zM1425 771H1512v1H1425z" fill="#1e9b8a" fill-opacity=".083"/>
<path d="M419.917 749.917H444.083V754.083H419.917ZM532.917 749.917H556.083V754.083H532.917ZM566.917 749.917H591.083V754.083H566.917ZM620.917 749.917H743.083V754.083H620.917ZM968.917 749.917H1135.083V754.083H968.917ZM1184.917 749.917H1346.083V754.083H1184.917ZM1468.917 749.917H1493.083V754.083H1468.917Z" fill="#25858e"/>
<path d="M420 749H444v1H420zM420 754H444v1H420zM533 749H556v1H533zM533 754H556v1H533zM567 749H591v1H567zM567 754H591v1H567zM621 749H743v1H621zM621 754H743v1H621zM969 749H1135v1H969zM969 754H1135v1H969zM1185 749H1346v1H1185zM1185 754H1346v1H1185zM1469 749H1493v1H1469zM1469 754H1493v1H1469z" fill="#25858e" fill-opacity=".083"/>
<path d="M429.917 733.917H453.083V738.083H429.917ZM576.917 733.917H733.083V738.083H576.917ZM993.917 733.917H1105.083V738.083H993.917ZM1115.917 733.917H1223.083V738.083H1115.917ZM1262.917 733.917H1292.083V738.083H1262.917ZM1488.917 733.917H1512.083V738.083H1488.917Z" fill="#2d708e"/>
<path d="M430 733H453v1H430zM430 738H453v1H430zM577 733H733v1H577zM577 738H733v1H577zM994 733H1105v1H994zM994 738H1105v1H994zM1116 733H1223v1H1116zM1116 738H1223v1H1116zM1263 733H1292v1H1263zM1263 738H1292v1H1263zM1489 733H1512v1H1489zM1489 738H1512v1H1489z" fill="#2d708e" fill-opacity=".083"/>
<path d="M591.917 717.917H615.083V722.083H591.917ZM654.917 717.917H772.083V722.083H654.917ZM1071.917 717.917H1243.083V722.083H1071.917ZM1262.917 717.917H1287.083V722.083H1262.917Z" fill="#375a8c"/>
<path d="M592 717H615v1H592zM592 722H615v1H592zM655 717H772v1H655zM655 722H772v1H655zM1072 717H1243v1H1072zM1072 722H1243v1H1072zM1263 717H1287v1H1263zM1263 722H1287v1H1263z" fill="#375a8c" fill-opacity=".083"/>
<path d="M595.917 700.917H733.083V705.083H595.917ZM1091.917 700.917H1120.083V705.083H1091.917ZM1199.917 700.917H1223.083V705.083H1199.917ZM1272.917 700.917H1326.083V705.083H1272.917Z" fill="#424086"/>
<path d="M596 700H733v1H596zM596 705H733v1H596zM1092 700H1120v1H1092zM1092 705H1120v1H1092zM1200 700H1223v1H1200zM1200 705H1223v1H1200zM1273 700H1326v1H1273zM1273 705H1326v1H1273z" fill="#424086" fill-opacity=".083"/>
<path d="M1110.917 684.917H1135.083V689.083H1110.917Z" fill="#482475"/>
<path d="M1111 684H1135v1H1111zM1111 689H1135v1H1111z" fill="#482475" fill-opacity=".083"/>
<path class="ml" d="M1394 842V641M1548 842V641M1687 842V641M75 842V641M219 842V641M365 842V641M506 842V641M651 842V641M797 842V641M940 842V641M1091 842V641M1239 842V641"/>
<text class="bl" x="106.95" y="832" letter-spacing="-0.35">KSE</text>
<text class="bl" x="244.75" y="832" letter-spacing="-0.4">ETA</text>
<text class="bl" x="483.95" y="832" letter-spacing="-0.4">NZC</text>
<text class="bl" x="699.06" y="832" letter-spacing="-0.54">NDA</text>
<text class="bl" x="843.62" y="832" letter-spacing="-0.33">SPE</text>
<text class="bl" x="935.04" y="832" letter-spacing="-0.55">ARD</text>
<text class="bl" x="1013.79" y="832" letter-spacing="-0.47">EGE</text>
<text class="bl" x="1131.97" y="832" letter-spacing="-0.52">NTA</text>
<text class="bl" x="1271.89" y="832" letter-spacing="-0.35">MON</text>
<text class="bl" x="1332.1" y="832" letter-spacing="0.05">URS</text>
<text class="bl" x="1400.89" y="832" letter-spacing="-0.45">AHY</text>
<text class="bl" x="1473.02" y="832" letter-spacing="-0.56">GUM</text>
<text class="bl" x="1523.89" y="832" letter-spacing="-0.52">OHY</text>
<text class="bl" x="1725.01" y="832" letter-spacing="-0.49">XHE</text>
<text class="bl" x="1760.93" y="832" letter-spacing="-0.67">EVI</text>
<text class="bl" x="166.04" y="815" letter-spacing="-0.56">AVB</text>
<text class="bl" x="246.01" y="815" letter-spacing="-0.44">ELY</text>
<text class="bl" x="312.1" y="815" letter-spacing="-0.53">CAM</text>
<text class="bl" x="421.01" y="815" letter-spacing="-0.45">SSG</text>
<text class="bl" x="568.1" y="815" letter-spacing="-0.49">PCA</text>
<text class="bl" x="708.51" y="815" letter-spacing="-0.26">AUD</text>
<text class="bl" x="797.89" y="815" letter-spacing="-0.38">AUR</text>
<text class="bl" x="920.08" y="815" letter-spacing="-0.51">DSX</text>
<text class="bl" x="999.05" y="815" letter-spacing="-0.54">OCU</text>
<text class="bl" x="1127.04" y="815" letter-spacing="-0.51">OER</text>
<text class="bl" x="1242.8" y="815" letter-spacing="-0.48">DKD</text>
<text class="bl" x="1292.98" y="815" letter-spacing="-0.43">DSV</text>
<text class="bl" x="1343.91" y="815" letter-spacing="-0.4">ALY</text>
<text class="bl" x="1399.89" y="815" letter-spacing="-0.54">JLE</text>
<text class="bl" x="1460.88" y="815" letter-spacing="-0.64">SCC</text>
<text class="bl" x="1548.66" y="815" letter-spacing="-0.44">FEV</text>
<text class="bl" x="166.86" y="799" letter-spacing="-0.49">LYR</text>
<text class="bl" x="363.05" y="799" letter-spacing="-0.7">JMC</text>
<text class="bl" x="551.01" y="799" letter-spacing="-0.77">JPE</text>
<text class="bl" x="661.01" y="799" letter-spacing="-0.48">PAU</text>
<text class="bl" x="764.98" y="799" letter-spacing="-0.41">NIA</text>
<text class="bl" x="1040.04" y="799" letter-spacing="-0.56">STA</text>
<text class="bl" x="1194.11" y="799" letter-spacing="-0.55">NOO</text>
<text class="bl" x="1340.97" y="799" letter-spacing="-0.52">COM</text>
<text class="bl" x="1459.05" y="799" letter-spacing="-0.61">NCC</text>
<text class="bl" x="1553.99" y="799" letter-spacing="-0.5">FED</text>
<text class="bl" x="196.98" y="783" letter-spacing="-0.48">HVI</text>
<text class="bl" x="402.64" y="783" letter-spacing="-0.37">ARI</text>
<text class="bl" x="518.88" y="783" letter-spacing="-0.58">SZC</text>
<text class="bl" x="607.79" y="783" letter-spacing="-0.44">CAP</text>
<text class="bl" x="806.89" y="783" letter-spacing="-0.57">NUE</text>
<text class="bl" x="950.02" y="783" letter-spacing="-0.49">OCT</text>
<text class="bl" x="1049.88" y="783" letter-spacing="-0.57">ORI</text>
<text class="bl" x="1173.92" y="783" letter-spacing="-0.46">AMO</text>
<text class="bl" x="1243.94" y="783" letter-spacing="-0.62">DPC</text>
<text class="bl" x="1319.89" y="783" letter-spacing="-0.66">XVI</text>
<text class="bl" x="1395.9" y="783" letter-spacing="-0.53">QUA</text>
<text class="bl" x="1547.94" y="783" letter-spacing="-0.52">AAN</text>
<text class="bl" x="342.02" y="766" letter-spacing="-0.04">TAH</text>
<text class="bl" x="423.05" y="766" letter-spacing="-0.54">JEA</text>
<text class="bl" x="475.12" y="766" letter-spacing="-0.55">JIP</text>
<text class="bl" x="528.88" y="766" letter-spacing="-0.52">PPS</text>
<text class="bl" x="568.04" y="766" letter-spacing="-0.55">ZCS</text>
<text class="bl" x="620.7" y="766" letter-spacing="-0.45">GDR</text>
<text class="bl" x="960.37" y="766" letter-spacing="-0.66">DRA</text>
<text class="bl" x="1062.1" y="766" letter-spacing="-0.41">LUM</text>
<text class="bl" x="1101.92" y="766" letter-spacing="-0.4">RPU</text>
<text class="bl" x="1166.29" y="766" letter-spacing="-0.2">THA</text>
<text class="bl" x="1249.02" y="766" letter-spacing="-0.38">PSU</text>
<text class="bl" x="1460.05" y="766" letter-spacing="-0.49">XCB</text>
<text class="bl" x="423.05" y="750" letter-spacing="-0.78">JRC</text>
<text class="bl" x="532.71" y="750" letter-spacing="-0.39">CAN</text>
<text class="bl" x="568.1" y="750" letter-spacing="-0.59">FAN</text>
<text class="bl" x="671.07" y="750" letter-spacing="-0.57">PER</text>
<text class="bl" x="1040.1" y="750" letter-spacing="-0.49">CTA</text>
<text class="bl" x="1253.92" y="750" letter-spacing="-0.41">HYD</text>
<text class="bl" x="1469.08" y="750" letter-spacing="-0.57">XUM</text>
<text class="bl" x="430" y="733" letter-spacing="-0.45">COR</text>
<text class="bl" x="646.73" y="733" letter-spacing="-0.49">SDA</text>
<text class="bl" x="1039.74" y="733" letter-spacing="-0.36">LMI</text>
<text class="bl" x="1156.03" y="733" letter-spacing="-0.43">LEO</text>
<text class="bl" x="1263.43" y="733" letter-spacing="-0.32">EHY</text>
<text class="bl" x="1489.9" y="733" letter-spacing="-0.52">ECV</text>
<text class="bl" x="595.05" y="717" letter-spacing="-0.76">JXA</text>
<text class="bl" x="704.97" y="717" letter-spacing="-0.62">KCG</text>
<text class="bl" x="1145.08" y="717" letter-spacing="-0.58">AND</text>
<text class="bl" x="1263.03" y="717" letter-spacing="-0.53">DAD</text>
<text class="bl" x="657.91" y="701" letter-spacing="-0.59">ERI</text>
<text class="bl" x="1098.08" y="701" letter-spacing="-0.51">SLD</text>
<text class="bl" x="1200.08" y="701" letter-spacing="-0.53">ORS</text>
<text class="bl" x="1288.01" y="701" letter-spacing="-0.49">GEM</text>
<text class="bl" x="1110.89" y="684" letter-spacing="-0.31">KUM</text>
<path d="M114 833h8v2h-8zM117 830h2v8h-2zM241 833h8v2h-8zM244 830h2v8h-2zM511 833h8v2h-8zM514 830h2v8h-2zM707 833h8v2h-8zM710 830h2v8h-2zM834 833h8v2h-8zM837 830h2v8h-2zM962 833h8v2h-8zM965 830h2v8h-2zM987 833h8v2h-8zM990 830h2v8h-2zM1117 833h8v2h-8zM1120 830h2v8h-2zM1296 833h8v2h-8zM1299 830h2v8h-2zM1342 833h8v2h-8zM1345 830h2v8h-2zM1413 833h8v2h-8zM1416 830h2v8h-2zM1482 833h8v2h-8zM1485 830h2v8h-2zM1531 833h8v2h-8zM1534 830h2v8h-2zM1732 833h8v2h-8zM1735 830h2v8h-2zM1766 833h8v2h-8zM1769 830h2v8h-2zM173 817h8v2h-8zM176 814h2v8h-2zM256 817h8v2h-8zM259 814h2v8h-2zM324 817h8v2h-8zM327 814h2v8h-2zM438 817h8v2h-8zM441 814h2v8h-2zM599 817h8v2h-8zM602 814h2v8h-2zM717 817h8v2h-8zM720 814h2v8h-2zM794 817h8v2h-8zM797 814h2v8h-2zM940 817h8v2h-8zM943 814h2v8h-2zM1006 817h8v2h-8zM1009 814h2v8h-2zM1153 817h8v2h-8zM1156 814h2v8h-2zM1251 817h8v2h-8zM1254 814h2v8h-2zM1300 817h8v2h-8zM1303 814h2v8h-2zM1350 817h8v2h-8zM1353 814h2v8h-2zM1403 817h8v2h-8zM1406 814h2v8h-2zM1467 817h8v2h-8zM1470 814h2v8h-2zM1555 817h8v2h-8zM1558 814h2v8h-2zM175 801h8v2h-8zM178 798h2v8h-2zM379 801h8v2h-8zM382 798h2v8h-2zM545 801h8v2h-8zM548 798h2v8h-2zM683 801h8v2h-8zM686 798h2v8h-2zM742 801h8v2h-8zM745 798h2v8h-2zM1075 801h8v2h-8zM1078 798h2v8h-2zM1217 801h8v2h-8zM1220 798h2v8h-2zM1305 801h8v2h-8zM1308 798h2v8h-2zM1467 801h8v2h-8zM1470 798h2v8h-2zM1560 801h8v2h-8zM1563 798h2v8h-2zM202 784h8v2h-8zM205 781h2v8h-2zM401 784h8v2h-8zM404 781h2v8h-2zM526 784h8v2h-8zM529 781h2v8h-2zM639 784h8v2h-8zM642 781h2v8h-2zM815 784h8v2h-8zM818 781h2v8h-2zM960 784h8v2h-8zM963 781h2v8h-2zM1041 784h8v2h-8zM1044 781h2v8h-2zM1188 784h8v2h-8zM1191 781h2v8h-2zM1251 784h8v2h-8zM1254 781h2v8h-2zM1325 784h8v2h-8zM1328 781h2v8h-2zM1403 784h8v2h-8zM1406 781h2v8h-2zM1546 784h8v2h-8zM1549 781h2v8h-2zM356 768h8v2h-8zM359 765h2v8h-2zM427 768h8v2h-8zM430 765h2v8h-2zM477 768h8v2h-8zM480 765h2v8h-2zM536 768h8v2h-8zM539 765h2v8h-2zM571 768h8v2h-8zM574 765h2v8h-2zM631 768h8v2h-8zM634 765h2v8h-2zM974 768h8v2h-8zM977 765h2v8h-2zM1070 768h8v2h-8zM1073 765h2v8h-2zM1109 768h8v2h-8zM1112 765h2v8h-2zM1178 768h8v2h-8zM1181 765h2v8h-2zM1256 768h8v2h-8zM1259 765h2v8h-2zM1467 768h8v2h-8zM1470 765h2v8h-2zM428 751h8v2h-8zM431 748h2v8h-2zM540 751h8v2h-8zM543 748h2v8h-2zM575 751h8v2h-8zM578 748h2v8h-2zM704 751h8v2h-8zM707 748h2v8h-2zM1095 751h8v2h-8zM1098 748h2v8h-2zM1271 751h8v2h-8zM1274 748h2v8h-2zM1477 751h8v2h-8zM1480 748h2v8h-2zM438 735h8v2h-8zM441 732h2v8h-2zM631 735h8v2h-8zM634 732h2v8h-2zM1039 735h8v2h-8zM1042 732h2v8h-2zM1168 735h8v2h-8zM1171 732h2v8h-2zM1275 735h8v2h-8zM1278 732h2v8h-2zM1497 735h8v2h-8zM1500 732h2v8h-2zM599 719h8v2h-8zM602 716h2v8h-2zM727 719h8v2h-8zM730 716h2v8h-2zM1188 719h8v2h-8zM1191 716h2v8h-2zM1271 719h8v2h-8zM1274 716h2v8h-2zM688 702h8v2h-8zM691 699h2v8h-2zM1102 702h8v2h-8zM1105 699h2v8h-2zM1207 702h8v2h-8zM1210 699h2v8h-2zM1300 702h8v2h-8zM1303 699h2v8h-2zM1119 686h8v2h-8zM1122 683h2v8h-2z" fill="#fff"/>
</g>
<rect x="20.5" y="641.5" width="1765" height="201" fill="none" stroke="#fff" stroke-width="1.11"/>
<path d="M20.5 842.5V847.5M265.5 842.5V847.5M510.5 842.5V847.5M755.5 842.5V847.5M1000.5 842.5V847.5M1246.5 842.5V847.5M1491.5 842.5V847.5M1736.5 842.5V847.5" stroke="#fff" stroke-width="1.11" fill="none"/>
<text class="xt" x="16.04" y="862">0</text>
<text class="xt" x="255.63" y="862" letter-spacing="-0.63">50</text>
<text class="xt" x="497.84" y="862" letter-spacing="-0.55">100</text>
<text class="xt" x="743.11" y="862" letter-spacing="-0.59">150</text>
<text class="xt" x="987.22" y="862" letter-spacing="-0.2">200</text>
<text class="xt" x="1233.09" y="862" letter-spacing="-0.15">250</text>
<text class="xt" x="1477.72" y="862" letter-spacing="-0.47">300</text>
<text class="xt" x="1722.75" y="862" letter-spacing="-0.47">350</text>
<text class="xt" x="829" y="882" letter-spacing="0.01">Solar longitude (deg)</text>
</svg></body></html>
